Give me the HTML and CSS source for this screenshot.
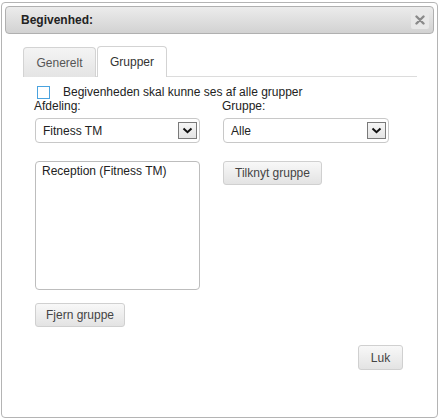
FILE: index.html
```html
<!DOCTYPE html>
<html>
<head>
<meta charset="utf-8">
<link rel="stylesheet" href="styles.css">
</head>
<body>
<div class="dialog">
  <div class="titlebar">
    <span class="title">Begivenhed:</span>
    <span class="close">
      <svg width="10" height="10" viewBox="0 0 10 10"><path d="M1.5 1.5 L8.5 8.5 M8.5 1.5 L1.5 8.5" stroke="#8a8a8a" stroke-width="2.4" stroke-linecap="round"/></svg>
    </span>
  </div>
  <div class="content">
    <ul class="tabs">
      <li class="tab">Generelt</li>
      <li class="tab active">Grupper</li>
    </ul>
    <div class="panel">
      <label class="check"><span class="box"></span><span>Begivenheden skal kunne ses af alle grupper</span></label>
      <div class="grid">
        <div class="field">
          <span class="label">Afdeling:</span>
          <div class="select"><span>Fitness TM</span><span class="arrow"><svg width="11" height="7" viewBox="0 0 11 7"><path d="M1.5 1.5 L5.5 5.2 L9.5 1.5" fill="none" stroke="#111" stroke-width="2"/></svg></span></div>
        </div>
        <div class="field right">
          <span class="label">Gruppe:</span>
          <div class="select wide"><span>Alle</span><span class="arrow"><svg width="11" height="7" viewBox="0 0 11 7"><path d="M1.5 1.5 L5.5 5.2 L9.5 1.5" fill="none" stroke="#111" stroke-width="2"/></svg></span></div>
        </div>
        <div class="listbox">Reception (Fitness TM)</div>
        <div class="right"><button class="btn tilknyt">Tilknyt gruppe</button></div>
      </div>
      <button class="btn fjern">Fjern gruppe</button>
      <div class="footer"><button class="btn luk">Luk</button></div>
    </div>
  </div>
</div>
</body>
</html>
```

FILE: styles.css
```css
html, body {
  margin: 0;
  padding: 0;
  background: #fff;
}
body {
  font-family: "Liberation Sans", Arial, sans-serif;
  font-size: 12px;
  color: #222;
}
.dialog {
  box-sizing: border-box;
  margin: 2px 0 0 1px;
  width: 437px;
  height: 416px;
  border: 1px solid #b4b4b4;
  border-radius: 4px;
  padding: 3px;
  background: #fff;
}
.titlebar {
  box-sizing: border-box;
  height: 28px;
  border: 1px solid #b0b0b0;
  border-radius: 4px;
  background: linear-gradient(#ececec, #d2d2d2);
  display: flex;
  align-items: center;
  justify-content: space-between;
  padding: 0 4px 0 15px;
}
.title {
  font-weight: bold;
  color: #222;
}
.close {
  width: 18px;
  height: 18px;
  background: #e8e8e8;
  border-radius: 2px;
  display: flex;
  align-items: center;
  justify-content: center;
}
.content {
  padding: 12px 17px 0 18px;
}
.tabs {
  list-style: none;
  margin: 0;
  padding: 0;
  display: flex;
  align-items: flex-end;
  border-bottom: 1px solid #dcdcdc;
  height: 30px;
}
.tab {
  box-sizing: border-box;
  height: 30px;
  margin-bottom: -1px;
  margin-right: 1px;
  border: 1px solid #d3d3d3;
  border-bottom: none;
  border-radius: 4px 4px 0 0;
  background: linear-gradient(#f4f4f4, #e4e4e4);
  color: #555;
  padding: 0 14px;
  display: flex;
  align-items: center;
}
.tab:first-child { width: 73px; justify-content: center; height: 30px; }
.tab.active {
  height: 31px;
  background: #fff;
  color: #333;
  width: 70px;
  justify-content: center;
  padding-bottom: 1px;
}
.panel {
  padding: 8px 0 0 12px;
}
.check {
  display: flex;
  align-items: center;
  gap: 13px;
  height: 14px;
  padding-left: 2px;
}
.box {
  box-sizing: border-box;
  width: 13px;
  height: 13px;
  border: 1px solid #4aa3df;
  background: #fff;
}
.grid {
  display: grid;
  grid-template-columns: 165px 166px;
  column-gap: 22px;
  row-gap: 18px;
  margin-top: 0;
}
.field {
  display: flex;
  flex-direction: column;
}
.label {
  line-height: 14px;
  margin-bottom: 5px;
  margin-left: -1px;
}
.select {
  box-sizing: border-box;
  height: 25px;
  border: 1px solid #c8c8c8;
  border-radius: 4px;
  display: flex;
  align-items: center;
  justify-content: space-between;
  padding: 0 2px 0 7px;
}
.select.wide { width: 166px; }
.arrow {
  box-sizing: border-box;
  width: 19px;
  height: 17px;
  border: 1px solid #7a7a7a;
  background: linear-gradient(#f6f6f6, #e4e4e4);
  display: flex;
  align-items: center;
  justify-content: center;
}
.listbox {
  box-sizing: border-box;
  height: 129px;
  border: 1px solid #bdbdbd;
  border-radius: 4px;
  padding: 2px 6px;
  line-height: 14px;
}
.right { padding-left: 1px; }
.btn {
  box-sizing: border-box;
  font-family: "Liberation Sans", Arial, sans-serif;
  font-size: 12px;
  color: #444;
  height: 24px;
  border: 1px solid #d0d0d0;
  border-radius: 3px;
  background: linear-gradient(#f8f8f8, #e3e3e3);
  padding: 0;
  margin: 0;
  display: block;
}
.tilknyt { width: 99px; }
.fjern { width: 90px; margin-top: 13px; }
.footer {
  display: flex;
  justify-content: flex-end;
  padding-right: 14px;
  margin-top: 18px;
}
.luk { width: 45px; height: 25px; }
```
